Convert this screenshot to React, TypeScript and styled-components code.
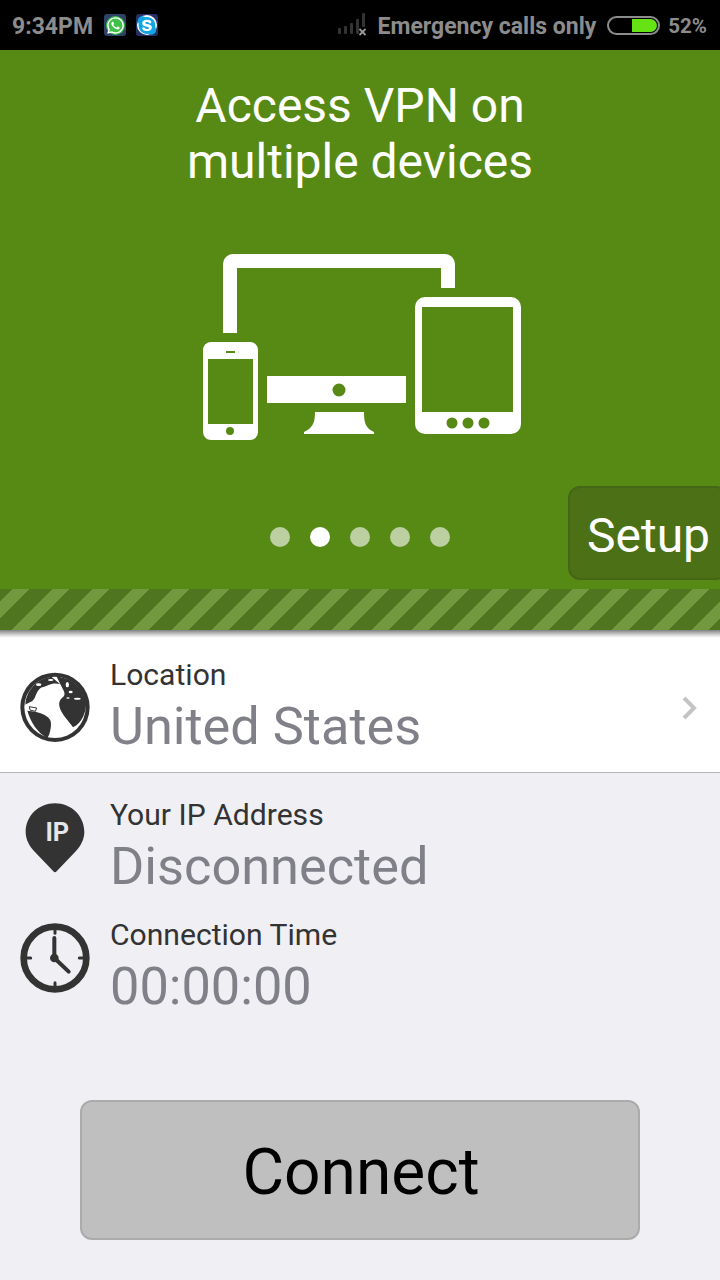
import React from 'react'
import styled, { createGlobalStyle } from 'styled-components'
import { FaSkype, FaWhatsapp } from 'react-icons/fa'

const colors = {
  hero: '#578a14',
  setup: '#4b7016',
  setupBorder: '#456616',
  stripeDark: '#4f7520',
  stripeLight: '#72993d',
  page: '#efeff4',
  label: '#333333',
  value: '#808088',
  status: '#8c8c8c'
}

const GlobalStyle = createGlobalStyle`
  html, body {
    margin: 0;
    padding: 0;
    background: ${colors.page};
  }
  body {
    font-family: Roboto, "Liberation Sans", sans-serif;
  }
`

function SignalIcon() {
  return (
    <svg width="30" height="24" viewBox="0 0 30 24">
      <g fill="#333">
        <rect x="1" y="15" width="3" height="6" rx="1" />
        <rect x="7" y="13" width="3" height="8" rx="1" />
        <rect x="13" y="10" width="3" height="11" rx="1" />
        <rect x="19" y="6" width="3" height="15" rx="1" />
        <rect x="25" y="0" width="3" height="14" rx="1" />
      </g>
      <path d="M22.5 16l6 6M28.5 16l-6 6" stroke="#9a9a9a" strokeWidth="1.8" />
    </svg>
  )
}

function DevicesIcon() {
  return (
    <svg width="320" height="190" viewBox="203 254 320 190">
      <g fill="#fff">
        <path d="M223 333V264a10 10 0 0 1 10-10H445a10 10 0 0 1 10 10V288H441V268H237V333Z" />
        <path
          fillRule="evenodd"
          d="M211 342H250a8 8 0 0 1 8 8V432a8 8 0 0 1-8 8H211a8 8 0 0 1-8-8V350a8 8 0 0 1 8-8ZM208 359V424H253V359ZM226 351V353H235V351ZM230 427a4 4 0 1 0 0 8 4 4 0 0 0 0-8Z"
        />
        <path
          fillRule="evenodd"
          d="M267 376H406V403H267ZM339 383.500a6.500 6.500 0 1 0 0 13 6.500 6.500 0 0 0 0-13Z"
        />
        <path d="M315 412H364C364 424 366 428 374 432V434H304V432C312 428 315 424 315 412Z" />
        <path
          fillRule="evenodd"
          d="M425 297H511a10 10 0 0 1 10 10V424a10 10 0 0 1-10 10H425a10 10 0 0 1-10-10V307a10 10 0 0 1 10-10ZM422 307V412H513V307ZM452 417.500a5.500 5.500 0 1 0 0 11 5.500 5.500 0 0 0 0-11ZM468 417.500a5.500 5.500 0 1 0 0 11 5.500 5.500 0 0 0 0-11ZM484 417.500a5.500 5.500 0 1 0 0 11 5.500 5.500 0 0 0 0-11Z"
        />
      </g>
    </svg>
  )
}

function GlobeIcon() {
  return (
    <svg width="74" height="76" viewBox="0 0 222 228">
      <circle cx="111" cy="112" r="104" fill="#333" />
      <circle cx="111" cy="112" r="92" fill="#fff" />
      <g fill="#333">
        <path d="M22 104C24 62 58 24 100 20L126 42C100 36 90 48 72 52C60 58 56 70 50 84C42 98 34 96 22 104Z" />
        <path d="M116 20C160 22 196 54 204 96C206 124 192 160 165 172C150 150 128 130 124 108C122 94 128 86 136 80C142 74 140 66 134 56Z" />
        <path d="M28 122C45 124 65 126 80 135C95 145 102 150 98 175C96 190 92 198 88 204C58 188 38 156 28 122Z" />
      </g>
      <g fill="#fff">
        <ellipse cx="62" cy="44" rx="8" ry="4" />
        <ellipse cx="98" cy="30" rx="8" ry="3" />
        <ellipse cx="148" cy="44" rx="5" ry="8" />
        <ellipse cx="158" cy="66" rx="6" ry="4" />
        <ellipse cx="178" cy="86" rx="10" ry="3" />
        <ellipse cx="150" cy="84" rx="5" ry="2" />
      </g>
      <path d="M34 110L56 114L52 124L36 120Z" fill="#fff" stroke="#333" strokeWidth="3" />
    </svg>
  )
}

function PinIcon() {
  return (
    <svg width="70" height="70" viewBox="60 69 210 210">
      <path d="M165 70C116 70 77 108 77 156C77 178 88 198 102 213L160 274C163 278 167 278 170 274L228 213C242 198 253 178 253 156C253 108 214 70 165 70Z" fill="#333" />
      <S.PinLabel x="172" y="182" textAnchor="middle">IP</S.PinLabel>
    </svg>
  )
}

function ClockIcon() {
  return (
    <svg width="70" height="70" viewBox="60 429 210 210">
      <circle cx="165" cy="534" r="94" fill="none" stroke="#333" strokeWidth="20" />
      <g stroke="#333" strokeWidth="9" strokeLinecap="round">
        <path d="M165 448V460M165 608V620M80 534H92M238 534H250" />
      </g>
      <path d="M163 474V534L206 575" fill="none" stroke="#333" strokeWidth="12" strokeLinecap="round" strokeLinejoin="round" />
      <circle cx="163" cy="534" r="13" fill="#333" />
    </svg>
  )
}

function ChevronIcon() {
  return (
    <svg width="16" height="24" viewBox="0 0 16 24">
      <path d="M3 2L13 12L3 22" fill="none" stroke="#c4c4c4" strokeWidth="4" />
    </svg>
  )
}

export default function App() {
  return (
    <>
      <GlobalStyle />
      <S.Screen>
        <S.StatusBar>
          <S.Time>9:34PM</S.Time>
          <S.Notification $bg="#2c4266">
            <S.WhatsappDot>
              <FaWhatsapp size={19} color="#fff" />
            </S.WhatsappDot>
          </S.Notification>
          <S.Notification $bg="#262f66">
            <S.SkypeDot>
              <FaSkype size={21} color="#12a5e6" />
            </S.SkypeDot>
          </S.Notification>
          <S.StatusRight>
            <SignalIcon />
            <S.Carrier>Emergency calls only</S.Carrier>
            <S.Battery>
              <S.BatteryFill style={{ width: '25px' }} />
            </S.Battery>
            <S.Percent>52%</S.Percent>
          </S.StatusRight>
        </S.StatusBar>

        <S.Hero>
          <S.Title>
            Access VPN on
            <br />
            multiple devices
          </S.Title>
          <S.Illustration>
            <DevicesIcon />
          </S.Illustration>
          <S.Dots>
            {[0, 1, 2, 3, 4].map(i => (
              <S.Dot key={i} $active={i === 1} />
            ))}
          </S.Dots>
          <S.SetupButton>Setup</S.SetupButton>
        </S.Hero>
        <S.Stripes />

        <S.LocationRow>
          <S.RowIcon $top={10} $left={-2}>
            <GlobeIcon />
          </S.RowIcon>
          <S.RowText $gap={18}>
            <S.Label>Location</S.Label>
            <S.Value>United States</S.Value>
          </S.RowText>
          <S.Chevron>
            <ChevronIcon />
          </S.Chevron>
        </S.LocationRow>

        <S.Info>
          <S.InfoRow>
            <S.RowIcon $top={3}>
              <PinIcon />
            </S.RowIcon>
            <S.RowText $gap={20}>
              <S.Label>Your IP Address</S.Label>
              <S.Value>Disconnected</S.Value>
            </S.RowText>
          </S.InfoRow>
          <S.InfoRow>
            <S.RowIcon $top={3}>
              <ClockIcon />
            </S.RowIcon>
            <S.RowText $gap={20}>
              <S.Label>Connection Time</S.Label>
              <S.Value>00:00:00</S.Value>
            </S.RowText>
          </S.InfoRow>
        </S.Info>

        <S.ConnectButton>Connect</S.ConnectButton>
      </S.Screen>
    </>
  )
}

const S = {
  Screen: styled.div`
    width: 720px;
    height: 1280px;
    overflow: hidden;
    display: flex;
    flex-direction: column;
    background: ${colors.page};
  `,
  StatusBar: styled.div`
    height: 50px;
    flex: none;
    display: flex;
    align-items: center;
    padding: 0 13px 0 12px;
    box-sizing: border-box;
    background: #000;
    color: ${colors.status};
    font-size: 23px;
    font-weight: 700;
  `,
  Time: styled.div`
    margin-right: 11px;
    padding-top: 2px;
  `,
  Notification: styled.div<{ $bg: string }>`
    width: 22px;
    height: 22px;
    margin-right: 10px;
    border-radius: 3px;
    background: ${props => props.$bg};
    display: flex;
    align-items: center;
    justify-content: center;
  `,
  WhatsappDot: styled.div`
    width: 19px;
    height: 19px;
    border-radius: 50%;
    background: #3fc04a;
    display: flex;
    align-items: center;
    justify-content: center;
  `,
  SkypeDot: styled.div`
    width: 20px;
    height: 20px;
    border-radius: 50%;
    background: #fff;
    display: flex;
    align-items: center;
    justify-content: center;
  `,
  StatusRight: styled.div`
    margin-left: auto;
    display: flex;
    align-items: center;
  `,
  Carrier: styled.div`
    margin-left: 11px;
    margin-right: 11px;
    padding-top: 2px;
  `,
  Battery: styled.div`
    width: 53px;
    height: 19px;
    box-sizing: border-box;
    border: 2px solid ${colors.status};
    border-radius: 10px;
    display: flex;
    justify-content: flex-end;
    padding: 1px;
    margin-right: 8px;
  `,
  BatteryFill: styled.div`
    background: #66e314;
    border-radius: 0 7px 7px 0;
  `,
  Percent: styled.div`
    font-size: 20.500px;
    padding-top: 2px;
  `,
  Hero: styled.div`
    position: relative;
    height: 539px;
    flex: none;
    background: ${colors.hero};
    display: flex;
    flex-direction: column;
    align-items: center;
    padding-top: 28px;
    box-sizing: border-box;
  `,
  Title: styled.div`
    color: #fff;
    font-size: 48px;
    line-height: 56px;
    text-align: center;
  `,
  Illustration: styled.div`
    margin-top: 64px;
    margin-left: 5px;
    height: 190px;
    line-height: 0;
  `,
  Dots: styled.div`
    margin-top: 83px;
    display: flex;
    gap: 20px;
  `,
  Dot: styled.div<{ $active: boolean }>`
    width: 20px;
    height: 20px;
    border-radius: 50%;
    background: ${props => (props.$active ? '#fff' : '#bccfa1')};
  `,
  SetupButton: styled.div`
    position: absolute;
    top: 436px;
    left: 568px;
    width: 160px;
    height: 94px;
    box-sizing: border-box;
    padding: 4px 0 0 17px;
    display: flex;
    align-items: center;
    background: ${colors.setup};
    border: 2px solid ${colors.setupBorder};
    border-radius: 12px;
    color: #fff;
    font-size: 48px;
  `,
  Stripes: styled.div`
    height: 41px;
    flex: none;
    background: repeating-linear-gradient(
      135deg,
      ${colors.stripeDark} 0,
      ${colors.stripeDark} 8.9px,
      ${colors.stripeLight} 8.9px,
      ${colors.stripeLight} 20.9px,
      ${colors.stripeDark} 20.9px,
      ${colors.stripeDark} 28.28px
    );
  `,
  LocationRow: styled.div`
    height: 143px;
    flex: none;
    box-sizing: border-box;
    display: flex;
    align-items: flex-start;
    padding: 30px 20px 0;
    background: linear-gradient(#808080 0, #e8e8e8 6px, #fff 8px);
    border-bottom: 1px solid #b5b5b5;
  `,
  RowIcon: styled.div<{ $top: number; $left?: number }>`
    flex: none;
    margin-top: ${props => props.$top}px;
    margin-left: ${props => props.$left || 0}px;
    line-height: 0;
  `,
  RowText: styled.div<{ $gap: number }>`
    margin-left: ${props => props.$gap}px;
    display: flex;
    flex-direction: column;
  `,
  Label: styled.div`
    color: ${colors.label};
    font-size: 30.100px;
    line-height: 30px;
  `,
  Value: styled.div`
    color: ${colors.value};
    font-size: 52.300px;
    line-height: 60px;
    margin-top: 6px;
  `,
  Chevron: styled.div`
    margin-left: auto;
    margin-top: 36px;
    margin-right: 3px;
    line-height: 0;
  `,
  PinLabel: styled.text`
    fill: #e6e6ea;
    font-family: Roboto, sans-serif;
    font-size: 76px;
    font-weight: 700;
  `,
  Info: styled.div`
    padding: 27px 20px 0;
    display: flex;
    flex-direction: column;
    gap: 24px;
  `,
  InfoRow: styled.div`
    display: flex;
    align-items: flex-start;
  `,
  ConnectButton: styled.button`
    margin: auto 80px 40px;
    height: 140px;
    flex: none;
    box-sizing: border-box;
    background: #bfbfbf;
    border: 2px solid #ababab;
    border-radius: 12px;
    color: #000;
    font-family: inherit;
    font-size: 64px;
    padding: 5px 0 0 2px;
  `
}
